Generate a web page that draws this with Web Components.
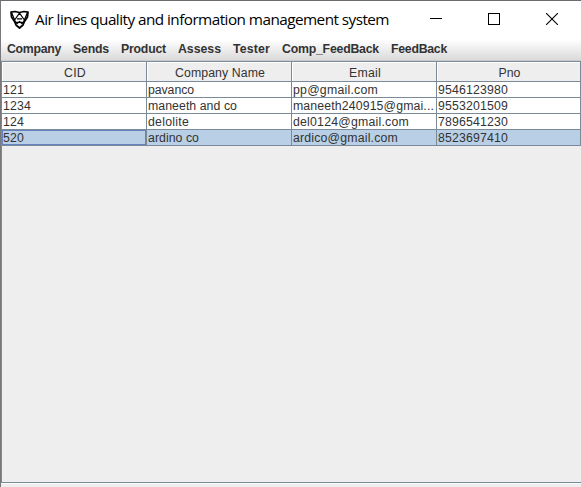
<!DOCTYPE html>
<html lang="en"><head><meta charset="utf-8"><title>Air lines quality and information management system</title>
<style>html,body{margin:0;height:100%;overflow:hidden}body{font-family:"Liberation Sans",Arial,sans-serif;font-size:12.3px;color:#333}</style></head>
<body><app-window></app-window>
<script>
// Text run whose tracking is adjusted to occupy a given advance width.
class FitText extends HTMLElement {
  connectedCallback() {
    const r = this.attachShadow({mode:'open'});
    r.innerHTML = '<style>:host{display:inline-block;white-space:pre}</style><span><slot></slot></span>';
    const s = r.querySelector('span'), n = this.textContent.length, w = +this.getAttribute('w');
    if (n) s.style.letterSpacing = ((w - s.getBoundingClientRect().width) / n) + 'px';
  }
}
class TitleBar extends HTMLElement {
  connectedCallback() {
    const title = this.textContent;
    this.attachShadow({mode:'open'}).innerHTML = `<style>
:host{display:flex;align-items:center;height:37px;background:#fff;color:#000;font-family:"Open Sans","Noto Sans",sans-serif;font-size:15.3px;line-height:22px}
.logo{margin-left:8px;margin-right:5px;display:block;flex:none}
fit-text{flex:1;padding-bottom:1px}
.controls{display:flex;margin-right:23px;margin-bottom:2px;gap:46px;flex:none}
svg{display:block}
</style>
<svg class="logo" width="21" height="20" viewBox="0 0 21 20" fill="none" stroke="#000" stroke-width="1.7" stroke-linejoin="round"><path d="M2 2.200L6 1.500L10.500 2.500L15 1.500L19 2.200L18.500 7L15.500 11.500L14 15L10.500 18L7 15L5.500 11.500L2.500 7Z"/><path stroke-width="1.3" d="M2.500 2.500L7 13.500M18.500 2.500L14 13.500M10.500 3L6 9.500M10.500 3L15 9.500M5.500 12.300H15.500M7.500 14L10.500 11.500L13.500 14M8 8.800H13"/></svg>
<fit-text w="354">${title}</fit-text>
<div class="controls">
<svg width="12" height="12" shape-rendering="crispEdges"><path d="M0 5.500H12" stroke="#000"/></svg>
<svg width="12" height="12" shape-rendering="crispEdges"><path d="M.5.5H11.500V11.500H.5Z" stroke="#000" fill="none"/></svg>
<svg width="12" height="12"><path d="M0 0L12 12M12 0L0 12" stroke="#000" stroke-width="1.100"/></svg>
</div>`;
  }
}
class MenuBar extends HTMLElement {
  connectedCallback() {
    this.attachShadow({mode:'open'}).innerHTML = `<style>
:host{display:flex;box-sizing:border-box;height:23px;padding:4px 0 0 6px;gap:12px;font-weight:bold;line-height:14px;background:linear-gradient(#fff,#fdfdfd 12%,#dadada);border-bottom:1px solid #ccc}
</style><slot></slot>`;
  }
}
class DataTable extends HTMLElement {
  connectedCallback() {
    this.attachShadow({mode:'open'}).innerHTML = `<style>
:host{display:block;flex:1;box-sizing:border-box;border:1px solid #7a8a99;border-right:0;background:#eee}
</style><slot></slot>`;
  }
}
class TableRow extends HTMLElement {
  connectedCallback() {
    this.attachShadow({mode:'open'}).innerHTML = `<style>
:host{display:grid;grid-template-columns:145px 145px 145px 144px;height:16px;line-height:16px;background:#fff}
:host([head]){height:20px;line-height:22px;background:#eee;text-align:center}
:host([selected]){background:#b8cfe5}
::slotted(div){box-sizing:border-box;height:16px;min-width:0;padding-left:1px;border-right:1px solid #7a8a99;border-bottom:1px solid #7a8a99;white-space:nowrap}
:host([head]) ::slotted(div){height:20px;padding:0 0 0 2px;box-shadow:inset 1px 1px #fff}
:host([selected]) ::slotted(div:first-child){box-shadow:inset 0 0 0 1px #6382bf}
</style><slot></slot>`;
  }
}
class AppWindow extends HTMLElement {
  connectedCallback() {
    const menu = [['Company',54],['Sends',36],['Product',45],['Assess',43],['Tester',37],['Comp_FeedBack',97],['FeedBack',56]];
    const head = [['CID',22],['Company Name',90],['Email',32],['Pno',22]];
    const rows = [
      [['121',21],['pavanco',46],['pp@gmail.com',85],['9546123980',70]],
      [['1234',28],['maneeth and co',89],['maneeth240915@gmai...',141],['9553201509',70]],
      [['124',21],['delolite',41],['del0124@gmail.com',116],['7896541230',70]],
      [['520',21],['ardino co',51],['ardico@gmail.com',105],['8523697410',70]]];
    const fit = ([t,w]) => `<fit-text w="${w}">${t}</fit-text>`;
    const row = (r,a='') => `<table-row ${a}>${r.map(c => `<div>${fit(c)}</div>`).join('')}</table-row>`;
    this.attachShadow({mode:'open'}).innerHTML = `<style>
:host{display:flex;flex-direction:column;box-sizing:border-box;width:581px;height:487px;border-top:1px solid #6c6a6e;border-left:1px solid #77777c;padding-bottom:4px;background:linear-gradient(#eee,#eee) bottom/100% 3px no-repeat,#fff}
</style><title-bar>Air lines quality and information management system</title-bar>
<menu-bar>${menu.map(fit).join('')}</menu-bar>
<data-table>${row(head,'head')}${rows.map((r,i) => row(r,i===3?'selected':'')).join('')}</data-table>`;
  }
}
customElements.define('fit-text', FitText);
customElements.define('title-bar', TitleBar);
customElements.define('menu-bar', MenuBar);
customElements.define('table-row', TableRow);
customElements.define('data-table', DataTable);
customElements.define('app-window', AppWindow);
</script></body></html>
